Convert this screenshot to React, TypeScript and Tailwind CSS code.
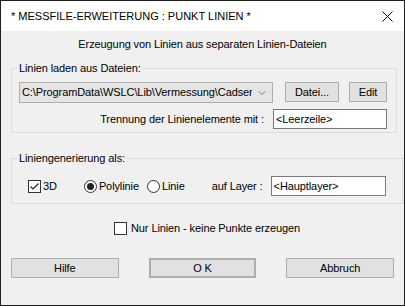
import { ChevronDown } from 'lucide-react';

const font = "font-['Liberation_Sans',Arial,sans-serif]";

function Button({ label, className = '' }: { label: string; className?: string }) {
  return (
    <button
      className={`h-[20px] bg-[#e1e1e1] border border-[#adadad] text-[11px] leading-none text-black flex items-center justify-center ${className}`}
    >
      {label}
    </button>
  );
}

function Checkbox({ checked }: { checked?: boolean }) {
  return (
    <span className="w-[13px] h-[13px] border border-[#333333] bg-white flex items-center justify-center shrink-0">
      {checked && (
        <svg width="11" height="11" viewBox="0 0 11 11">
          <path d="M1.5 5.5 L4 8 L9.5 2.5" fill="none" stroke="#222" strokeWidth="1.2" />
        </svg>
      )}
    </span>
  );
}

function Radio({ checked }: { checked?: boolean }) {
  return (
    <span className="w-[13px] h-[13px] rounded-full border border-[#333333] bg-white flex items-center justify-center shrink-0">
      {checked && <span className="w-[7px] h-[7px] rounded-full bg-[#222222]" />}
    </span>
  );
}

export default function App() {
  return (
    <div className={`w-[405px] h-[306px] border border-[#1f1f1f] flex flex-col text-black ${font}`}>
      {/* Title bar */}
      <div className="h-[30px] bg-white flex items-center justify-between pl-[10px] pr-[10px]">
        <span className="text-[11px]">* MESSFILE-ERWEITERUNG : PUNKT LINIEN *</span>
        <svg width="11" height="11" viewBox="0 0 11 11" className="mr-[1px]">
          <path d="M0.5 0.5 L10.5 10.5 M10.5 0.5 L0.5 10.5" stroke="#111" strokeWidth="1" />
        </svg>
      </div>

      {/* Body */}
      <div className="flex-1 bg-[#f0f0f0] flex flex-col text-[11px] leading-[13px] tracking-[-0.1px] px-[10px] whitespace-nowrap">
        <div className="pt-[7px] text-center">Erzeugung von Linien aus separaten Linien-Dateien</div>

        <fieldset className="mt-[11px] border border-[#dcdcdc] px-[7px] pb-[3px] w-[386px]">
          <legend className="ml-[-2px] px-[2px]">Linien laden aus Dateien:</legend>
          <div className="flex items-center mt-[7px]">
            <div className="w-[254px] h-[21px] bg-[#e5e5e5] border border-[#adadad] flex items-center pl-[2px] pr-[4px]">
              <span className="flex-1 overflow-hidden">
                {'C:\\ProgramData\\WSLC\\Lib\\Vermessung\\Cadser'}
              </span>
              <ChevronDown size={12} strokeWidth={1.3} className="ml-[4px] shrink-0 text-[#444]" />
            </div>
            <Button label="Datei..." className="ml-[12px] w-[54px] -mt-[1px]" />
            <Button label="Edit" className="ml-[10px] w-[38px] -mt-[1px]" />
          </div>
          <div className="flex items-center justify-end mt-[6px]">
            <span className="mr-[9px]">Trennung der Linienelemente mit :</span>
            <div className="w-[114px] h-[20px] bg-white border border-[#7a7a7a] flex items-center pl-[2px]">
              {'<Leerzeile>'}
            </div>
            <span className="w-[2px]" />
          </div>
        </fieldset>

        <fieldset className="mt-[19px] border border-[#dcdcdc] px-[16px] pb-[7px] w-[386px]">
          <legend className="ml-[-11px] px-[2px]">Liniengenerierung als:</legend>
          <div className="flex items-center mt-[11px] h-[20px]">
            <Checkbox checked />
            <span className="ml-[2px]">3D</span>
            <span className="ml-[27px]"><Radio checked /></span>
            <span className="ml-[2px]">Polylinie</span>
            <span className="ml-[8px]"><Radio /></span>
            <span className="ml-[2px]">Linie</span>
            <span className="ml-[27px]">auf Layer :</span>
            <div className="ml-[8px] w-[115px] h-[20px] bg-white border border-[#7a7a7a] flex items-center pl-[2px]">
              {'<Hauptlayer>'}
            </div>
          </div>
        </fieldset>

        <div className="flex items-center mt-[18px] pl-[103px]">
          <Checkbox />
          <span className="ml-[4px]">Nur Linien - keine Punkte erzeugen</span>
        </div>

        <div className="flex mt-[23px]">
          <Button label="Hilfe" className="w-[108px]" />
          <Button label="O K" className="ml-[30px] w-[108px] border-2 border-[#0078d7]" />
          <Button label="Abbruch" className="ml-[30px] w-[108px]" />
        </div>
      </div>
    </div>
  );
}
